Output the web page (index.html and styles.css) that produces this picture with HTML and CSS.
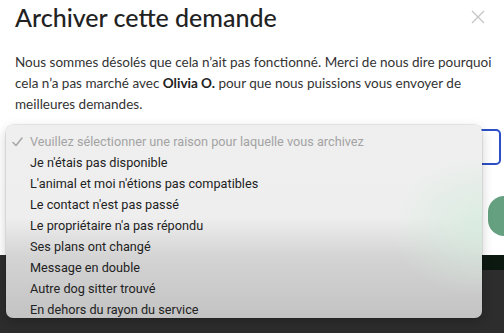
FILE: index.html
```html
<!DOCTYPE html>
<html lang="fr">
<head>
    <meta charset="UTF-8">
    <meta name="viewport" content="width=device-width, initial-scale=1.0">
    <title>Archiver cette demande</title>
    <link rel="stylesheet" href="styles.css">
</head>
<body>
    <div class="modal">
        <div class="modal-head">
            <h1>Archiver cette demande</h1>
            <button class="close" aria-label="Fermer">
                <svg width="14" height="14" viewBox="0 0 14 14"><path d="M1 1L13 13M13 1L1 13" stroke="#c4c4c4" stroke-width="1.2" fill="none"/></svg>
            </button>
        </div>
        <p class="intro">Nous sommes désolés que cela n’ait pas fonctionné. Merci de nous dire pourquoi cela n’a pas marché avec <strong>Olivia O.</strong> pour que nous puissions vous envoyer de meilleures demandes.</p>
        <div class="select"></div>
        <div class="actions">
            <button class="btn-green"></button>
        </div>
    </div>
    <div class="footer">
        <div class="footer-bar"></div>
    </div>

    <ul class="menu">
        <li class="placeholder">
            <svg class="check" width="11" height="10" viewBox="0 0 11 10"><path d="M1 5.5L4 8.5L10 1" stroke="#a8a8a8" stroke-width="1.6" fill="none" stroke-linecap="round" stroke-linejoin="round"/></svg>
            Veuillez sélectionner une raison pour laquelle vous archivez
        </li>
        <li>Je n'étais pas disponible</li>
        <li>L'animal et moi n'étions pas compatibles</li>
        <li>Le contact n'est pas passé</li>
        <li>Le propriétaire n'a pas répondu</li>
        <li>Ses plans ont changé</li>
        <li>Message en double</li>
        <li>Autre dog sitter trouvé</li>
        <li>En dehors du rayon du service</li>
    </ul>
</body>
</html>
```

FILE: styles.css
```css
body {
    margin: 0;
    padding: 0;
    background-color: #2d2d2d;
    font-family: Lato, "Open Sans", sans-serif;
    color: #333;
    overflow: hidden;
}

.modal {
    background-color: #fff;
    height: 255px;
    padding: 0 0 0 15px;
    box-sizing: border-box;
}

.modal-head {
    display: flex;
    justify-content: space-between;
    align-items: flex-start;
    padding-top: 1px;
}

h1 {
    margin: 0;
    font-size: 25px;
    font-weight: 500;
    color: #222;
    line-height: 32px;
}

.close {
    border: none;
    background: none;
    padding: 0;
    margin: 9px 19px 0 0;
    width: 14px;
    height: 14px;
}

.intro {
    margin: 19px 12px 0 0;
    font-size: 13.5px;
    line-height: 21px;
    color: #333;
}

.intro strong {
    font-weight: 700;
    color: #222;
}

.select {
    margin-top: 14px;
    margin-right: 3px;
    height: 36px;
    border: 2px solid #2a4fc6;
    border-radius: 5px;
    box-sizing: border-box;
}

.actions {
    display: flex;
    justify-content: flex-end;
    margin-top: 31px;
}

.btn-green {
    width: 16px;
    height: 40px;
    border: none;
    border-radius: 20px 0 0 20px;
    background-color: #65a181;
}

.footer {
    height: 78px;
}

.footer-bar {
    margin-left: 50%;
    height: 15px;
    background-color: #0c1911;
}

.menu {
    position: absolute;
    left: 6px;
    top: 125px;
    width: 476px;
    height: 193px;
    margin: 0;
    padding: 6px 0 0;
    box-sizing: border-box;
    list-style: none;
    border-radius: 7px;
    background:
        radial-gradient(ellipse 90px 70px at 100% 52%, rgba(214, 236, 222, 0.85), rgba(214, 236, 222, 0)),
        linear-gradient(to bottom, #efefef 0, #eeeeee 48%, #d4d4d4 68%, #c3c3c3 100%);
    box-shadow: 0 0 0 0.5px rgba(0, 0, 0, 0.15), 0 4px 12px rgba(0, 0, 0, 0.2);
    font-family: Roboto, "Liberation Sans", sans-serif;
    font-size: 12.7px;
    color: #222;
}

.menu li {
    height: 21px;
    line-height: 21px;
    padding-left: 24px;
    position: relative;
}

.menu .placeholder {
    color: #a3a3a3;
}

.check {
    position: absolute;
    left: 6px;
    top: 6px;
}
```
